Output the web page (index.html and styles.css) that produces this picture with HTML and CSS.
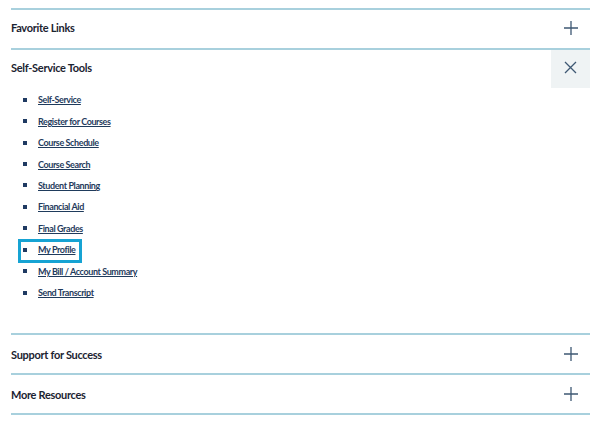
FILE: index.html
```html
<!DOCTYPE html>
<html lang="en">
<head>
<meta charset="utf-8">
<link rel="stylesheet" href="styles.css">
</head>
<body>
<div class="accordion">
  <section class="panel">
    <div class="panel-head lift">
      <h2 class="panel-title">Favorite Links</h2>
      <span class="toggle">
        <svg width="16" height="16" viewBox="0 0 16 16"><path d="M8 1V15M1 8H15" stroke="#3e5873" stroke-width="1.3" fill="none"/></svg>
      </span>
    </div>
  </section>
  <section class="panel open">
    <div class="panel-head lift">
      <h2 class="panel-title">Self-Service Tools</h2>
      <span class="toggle active">
        <svg width="13" height="13" viewBox="0 0 13 13"><path d="M1 1L12 12M12 1L1 12" stroke="#3e5873" stroke-width="1.3" fill="none"/></svg>
      </span>
    </div>
    <ul class="links">
      <li><a href="#">Self-Service</a></li>
      <li><a href="#">Register for Courses</a></li>
      <li><a href="#">Course Schedule</a></li>
      <li><a href="#">Course Search</a></li>
      <li><a href="#">Student Planning</a></li>
      <li><a href="#">Financial Aid</a></li>
      <li><a href="#">Final Grades</a></li>
      <li class="highlight"><a href="#">My Profile</a></li>
      <li><a href="#">My Bill / Account Summary</a></li>
      <li><a href="#">Send Transcript</a></li>
    </ul>
  </section>
  <section class="panel">
    <div class="panel-head">
      <h2 class="panel-title">Support for Success</h2>
      <span class="toggle">
        <svg width="16" height="16" viewBox="0 0 16 16"><path d="M8 1V15M1 8H15" stroke="#3e5873" stroke-width="1.3" fill="none"/></svg>
      </span>
    </div>
  </section>
  <section class="panel last">
    <div class="panel-head">
      <h2 class="panel-title">More Resources</h2>
      <span class="toggle">
        <svg width="16" height="16" viewBox="0 0 16 16"><path d="M8 1V15M1 8H15" stroke="#3e5873" stroke-width="1.3" fill="none"/></svg>
      </span>
    </div>
  </section>
</div>
</body>
</html>
```
FILE: styles.css
```css
html, body {
  margin: 0;
  padding: 0;
  background: #ffffff;
}
body {
  font-family: Lato, "Liberation Sans", sans-serif;
  color: #1b2331;
}
.accordion {
  padding: 8px 10px 0 11px;
}
.panel {
  border-top: 2px solid #a8d0dd;
}
.panel.last {
  border-bottom: 2px solid #a8d0dd;
}
.panel-head {
  height: 38px;
  display: flex;
  align-items: center;
  justify-content: space-between;
}
.panel-head.lift .panel-title {
  padding-bottom: 3px;
}
.panel-title {
  margin: 0;
  font-size: 11px;
  font-weight: 700;
  letter-spacing: -0.3px;
  color: #1b2331;
}
.toggle {
  width: 39px;
  height: 38px;
  display: flex;
  align-items: center;
  justify-content: center;
}
.panel-head.lift .toggle svg {
  margin-bottom: 3px;
}
.toggle.active {
  background: #eff3f4;
}
.toggle.active svg {
  margin-bottom: 2px;
}
.links {
  list-style: none;
  margin: 0;
  padding: 1px 0 30px 0;
}
.links li {
  height: 21.45px;
  display: flex;
  align-items: center;
  position: relative;
  padding-left: 27px;
}
.links li::before {
  content: "";
  position: absolute;
  left: 12px;
  top: 50%;
  width: 4px;
  height: 4px;
  margin-top: -2px;
  background: #1f3a62;
}
.links a {
  font-size: 9px;
  font-weight: 700;
  letter-spacing: -0.4px;
  color: #1f3b5c;
  text-decoration: underline;
  text-underline-offset: 1px;
}
.links li.highlight::after {
  content: "";
  position: absolute;
  left: 7px;
  top: -0.5px;
  width: 58px;
  height: 18px;
  border: 3px solid #16a3d3;
  box-sizing: content-box;
}
```
